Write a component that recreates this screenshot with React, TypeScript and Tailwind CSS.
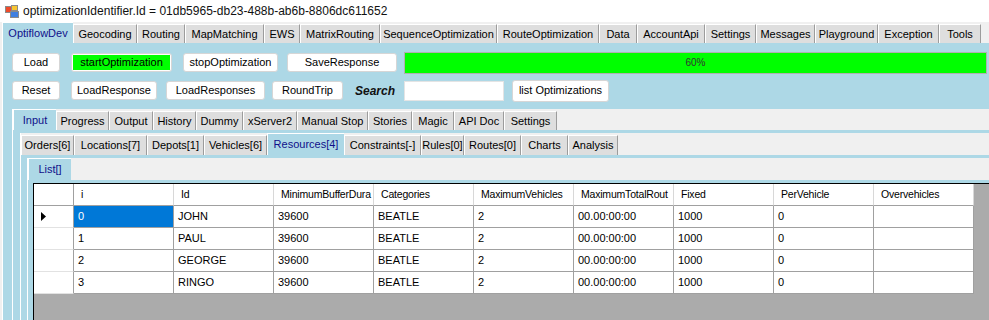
import React from "react";

type TabDef = { label: string; w: string; sel?: boolean };

const outerTabs: TabDef[] = [
  { label: "OptiflowDev", w: "w-[71px]", sel: true },
  { label: "Geocoding", w: "w-[64px]" },
  { label: "Routing", w: "w-[48px]" },
  { label: "MapMatching", w: "w-[79px]" },
  { label: "EWS", w: "w-[36px]" },
  { label: "MatrixRouting", w: "w-[80px]" },
  { label: "SequenceOptimization", w: "w-[117px]" },
  { label: "RouteOptimization", w: "w-[102px]" },
  { label: "Data", w: "w-[38px]" },
  { label: "AccountApi", w: "w-[68px]" },
  { label: "Settings", w: "w-[51px]" },
  { label: "Messages", w: "w-[59px]" },
  { label: "Playground", w: "w-[63px]" },
  { label: "Exception", w: "w-[61px]" },
  { label: "Tools", w: "w-[42px]" },
];

const inputTabs: TabDef[] = [
  { label: "Input", w: "w-[43px]", sel: true },
  { label: "Progress", w: "w-[53px]" },
  { label: "Output", w: "w-[44px]" },
  { label: "History", w: "w-[43px]" },
  { label: "Dummy", w: "w-[47px]" },
  { label: "xServer2", w: "w-[54px]" },
  { label: "Manual Stop", w: "w-[71px]" },
  { label: "Stories", w: "w-[44px]" },
  { label: "Magic", w: "w-[42px]" },
  { label: "API Doc", w: "w-[50px]" },
  { label: "Settings", w: "w-[53px]" },
];

const dataTabs: TabDef[] = [
  { label: "Orders[6]", w: "w-[53px]" },
  { label: "Locations[7]", w: "w-[73px]" },
  { label: "Depots[1]", w: "w-[57px]" },
  { label: "Vehicles[6]", w: "w-[63px]" },
  { label: "Resources[4]", w: "w-[77px]", sel: true },
  { label: "Constraints[-]", w: "w-[77px]" },
  { label: "Rules[0]", w: "w-[43px]" },
  { label: "Routes[0]", w: "w-[57px]" },
  { label: "Charts", w: "w-[47px]" },
  { label: "Analysis", w: "w-[50px]" },
];

// header captions are clipped by the grid, as on screen
const columns = [
  "i",
  "Id",
  "MinimumBufferDura",
  "Categories",
  "MaximumVehicles",
  "MaximumTotalRout",
  "Fixed",
  "PerVehicle",
  "Overvehicles",
];

const rows = [
  ["0", "JOHN", "39600", "BEATLE", "2", "00.00:00:00", "1000", "0", ""],
  ["1", "PAUL", "39600", "BEATLE", "2", "00.00:00:00", "1000", "0", ""],
  ["2", "GEORGE", "39600", "BEATLE", "2", "00.00:00:00", "1000", "0", ""],
  ["3", "RINGO", "39600", "BEATLE", "2", "00.00:00:00", "1000", "0", ""],
];

function TabStrip({ tabs, h }: { tabs: TabDef[]; h: string }) {
  return (
    <div className={`${h} flex items-end shrink-0 bg-[#f0f0f0]`}>
      {tabs.map((t) =>
        t.sel ? (
          <div
            key={t.label}
            className={`${t.w} h-full shrink-0 bg-[#add8e6] border-t border-l border-white flex items-center justify-center text-[#10108a] whitespace-nowrap`}
          >
            {t.label}
          </div>
        ) : (
          <div
            key={t.label}
            className={`${t.w} h-[calc(100%-2px)] shrink-0 bg-[#dedede] border-t border-l border-white border-r border-r-[#9c9c9c] flex items-center justify-center whitespace-nowrap`}
          >
            {t.label}
          </div>
        )
      )}
    </div>
  );
}

function Btn({ w, children }: { w: string; children: React.ReactNode }) {
  return (
    <div
      className={`${w} h-[19px] shrink-0 bg-white border border-[#d6d6d6] rounded-[3px] flex items-center justify-center whitespace-nowrap`}
    >
      {children}
    </div>
  );
}

function FormIcon() {
  return (
    <svg width="16" height="16" viewBox="0 0 16 16">
      <rect x="1.5" y="3.5" width="7" height="6" fill="#f04a2a" stroke="#8a8a8a" />
      <rect x="7.5" y="2.5" width="6" height="5" fill="#f7c531" stroke="#8a8a8a" />
      <rect x="6.5" y="8.5" width="8" height="6" fill="#3f7fe0" stroke="#8a8a8a" />
    </svg>
  );
}

export default function App() {
  return (
    <div className="w-[989px] h-[320px] overflow-hidden bg-[#f0f0f0] font-['Liberation_Sans',Arial,sans-serif] text-[11px] text-black flex flex-col">
      {/* title */}
      <div className="h-[22px] shrink-0 bg-white flex items-center">
        <div className="ml-[4px] w-[16px] h-[16px]">
          <FormIcon />
        </div>
        <span className="ml-[3px] text-[12px] text-[#111]">
          optimizationIdentifier.Id = 01db5965-db23-488b-ab6b-8806dc611652
        </span>
      </div>

      <div className="pl-[2px]">
        <TabStrip tabs={outerTabs} h="h-[21px]" />
      </div>

      {/* OptiflowDev page */}
      <div className="flex-1 min-h-0 ml-[2px] bg-[#add8e6] border-l border-white pl-[9px] pt-[10px] flex flex-col">
        <div className="h-[19px] flex items-center shrink-0">
          <Btn w="w-[48px]">Load</Btn>
          <div className="ml-[11px] w-[101px] h-[19px] shrink-0 bg-white border border-[#d6d6d6] rounded-[3px] p-[1px]">
            <div className="h-full bg-[#00ff00] flex items-center justify-center">startOptimization</div>
          </div>
          <div className="ml-[11px]">
            <Btn w="w-[95px]">stopOptimization</Btn>
          </div>
          <div className="ml-[9px]">
            <Btn w="w-[110px]">SaveResponse</Btn>
          </div>
          <div className="ml-[7px] w-[583px] h-[22px] shrink-0 bg-[#00ff00] border border-[#b0b0b0] flex items-center justify-center text-[10px] text-[#333]">
            60%
          </div>
        </div>

        <div className="mt-[9px] h-[19px] flex items-center shrink-0">
          <Btn w="w-[48px]">Reset</Btn>
          <div className="ml-[11px]">
            <Btn w="w-[86px]">LoadResponse</Btn>
          </div>
          <div className="ml-[9px]">
            <Btn w="w-[99px]">LoadResponses</Btn>
          </div>
          <div className="ml-[7px]">
            <Btn w="w-[71px]">RoundTrip</Btn>
          </div>
          <span className="ml-[12px] w-[49px] text-[12px] font-bold italic text-[#111]">Search</span>
          <div className="w-[100px] h-[20px] shrink-0 bg-white border border-[#e4e4e4]" />
          <div className="ml-[8px] w-[97px] h-[22px] shrink-0 bg-white border border-[#d6d6d6] rounded-[3px] flex items-center justify-center">
            list Optimizations
          </div>
        </div>

        {/* TabControl Input */}
        <div className="mt-[9px] flex-1 min-h-0 flex flex-col border-l border-white">
          <TabStrip tabs={inputTabs} h="h-[21px]" />
          <div className="flex-1 min-h-0 bg-[#add8e6] pl-[7px] pt-[3px] flex flex-col">
            {/* TabControl data */}
            <div className="flex-1 min-h-0 flex flex-col border-l border-white">
              <TabStrip tabs={dataTabs} h="h-[22px]" />
              <div className="flex-1 min-h-0 bg-[#add8e6] pl-[6px] pt-[3px] flex flex-col">
                {/* TabControl List */}
                <div className="flex-1 min-h-0 flex flex-col border-l border-white">
                  <TabStrip tabs={[{ label: "List[]", w: "w-[43px]", sel: true }]} h="h-[22px]" />
                  <div className="flex-1 min-h-0 bg-[#add8e6] pl-[5px] pt-[3px] flex flex-col">
                    <div className="flex-1 min-h-0 bg-[#ababab] border-l border-t border-black">
                      <div className="flex h-[22px]">
                        <div className="w-[40px] shrink-0 bg-white border-r border-b border-r-[#a0a0a0] border-b-[#a0a0a0]" />
                        {columns.map((c) => (
                          <div
                            key={c}
                            className="w-[100px] shrink-0 bg-white border-r border-b border-r-[#d8d8d8] border-b-[#a0a0a0] pl-[7px] flex items-center whitespace-nowrap text-[10.5px] tracking-[-0.2px]"
                          >
                            {c}
                          </div>
                        ))}
                      </div>
                      {rows.map((r, ri) => (
                        <div key={ri} className="flex h-[22px]">
                          <div className="w-[40px] shrink-0 bg-white border-r border-b border-r-[#a0a0a0] border-b-[#e2e2e2] flex items-center pl-[7px]">
                            {ri === 0 && (
                              <svg width="5" height="9" viewBox="0 0 5 9">
                                <path d="M0 0 L5 4.5 L0 9 Z" fill="#000" />
                              </svg>
                            )}
                          </div>
                          {r.map((v, ci) => (
                            <div
                              key={ci}
                              className={
                                ri === 0 && ci === 0
                                  ? "w-[100px] shrink-0 bg-[#0078d7] text-white border-r border-b border-[#a0a0a0] pl-[4px] flex items-center"
                                  : "w-[100px] shrink-0 bg-white border-r border-b border-[#a0a0a0] pl-[4px] flex items-center"
                              }
                            >
                              {v}
                            </div>
                          ))}
                        </div>
                      ))}
                    </div>
                  </div>
                </div>
              </div>
            </div>
          </div>
        </div>
      </div>
    </div>
  );
}
